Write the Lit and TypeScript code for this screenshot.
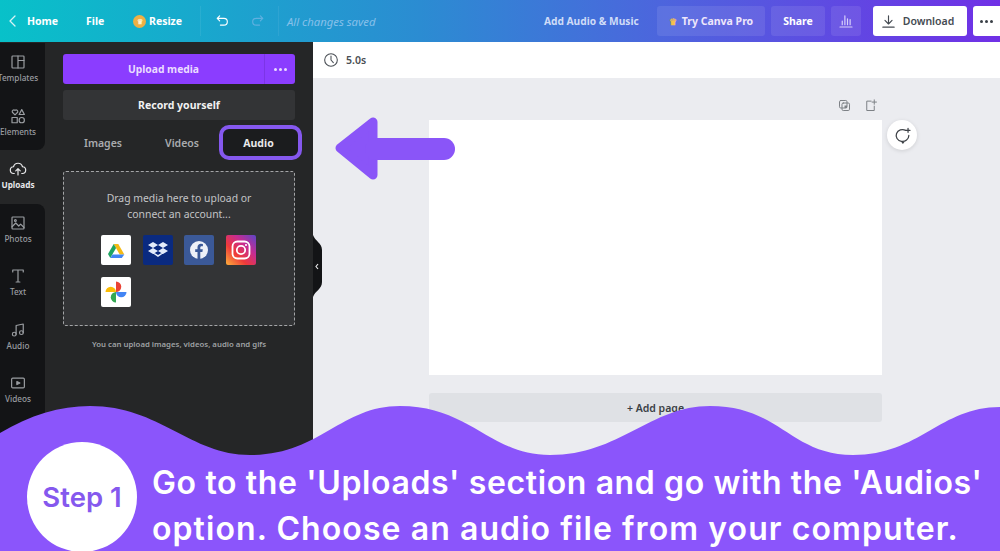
import { LitElement, html, css, svg } from "lit";
import { customElement } from "lit/decorators.js";

const ic = (body: unknown, size = 20, vb = 24) => html`<svg width=${size} height=${size} viewBox="0 0 ${vb} ${vb}" fill="none" stroke="currentColor" stroke-width="1.6" stroke-linecap="round" stroke-linejoin="round">${body}</svg>`;

const railItems: [string, unknown][] = [
  ["Templates", svg`<rect x="4" y="4" width="16" height="16" rx="1"/><path d="M12 4v16M12 10h8"/>`],
  ["Elements", svg`<path d="M8 10.500 4.500 7a2.200 2.200 0 0 1 3.500-2.500A2.200 2.200 0 0 1 11.500 7Z"/><path d="M17 3.500 20.500 10h-7Z"/><rect x="4" y="14" width="7" height="7"/><circle cx="17" cy="17.500" r="3.500"/>`],
  ["Uploads", svg`<path d="M7 18H6.500a4.500 4.500 0 0 1-.5-9 6.200 6.200 0 0 1 12 0 4.500 4.500 0 0 1-.5 9H17"/><path d="M12 20v-8M9 14.500l3-3 3 3"/>`],
  ["Photos", svg`<rect x="4" y="4" width="16" height="16" rx="1"/><circle cx="8.500" cy="8.500" r="1.200"/><path d="m4 17 5-5 4 4 2.500-2.500L20 18"/>`],
  ["Text", svg`<path d="M5 6.500V4h14v2.500M12 4v16M9.500 20h5"/>`],
  ["Audio", svg`<path d="M9.500 17.500V6l9.500-2v11.500"/><circle cx="7" cy="17.500" r="2.500"/><circle cx="16.500" cy="15.500" r="2.500"/>`],
  ["Videos", svg`<rect x="3.500" y="5.500" width="17" height="13" rx="1.500"/><path d="m10.500 10 4 2-4 2Z" fill="currentColor"/>`],
];

@customElement("app-root")
export class AppRoot extends LitElement {
  static styles = css`
    :host { display: block; width: 1000px; height: 551px; position: relative; overflow: hidden; font-family: "Noto Sans", "Open Sans", sans-serif; background: #ebecf0; }
    * { box-sizing: border-box; }
    .top { height: 42px; display: flex; align-items: center; color: #fff; font-size: 10.500px; font-weight: 700; background: linear-gradient(90deg, #08c1c9 0%, #2b8cd2 42%, #4f62de 68%, #7030e6 100%); }
    .top svg { display: block; flex: none; }
    .back { margin-left: 6px; width: 14px; }
    .home { margin-left: 7px; width: 59px; }
    .file { width: 39px; }
    .coin { width: 13px; height: 13px; margin-left: 8px; border-radius: 50%; background: #eeb045; margin-right: 3px; display: flex; align-items: center; justify-content: center; color: #fff3cf; font-size: 7px; line-height: 1; }
    .resize { width: 33px; }
    .sep { width: 1px; height: 30px; background: rgba(255,255,255,.07); flex: none; }
    .s1 { margin-left: 18px; }
    .s2 { margin-left: 12px; }
    .undo { margin-left: 13px; color: #fff; }
    .redo { margin-left: 18px; color: #5fb0e0; }
    .saved { margin-left: 8px; width: 257px; font-style: italic; font-weight: 400; color: #86c0ea; font-size: 11.300px; }
    .addaudio { width: 113px; color: #cfdcf7; font-size: 10.200px; }
    .tb { height: 30px; border-radius: 3px; background: rgba(255,255,255,.09); display: flex; align-items: center; justify-content: center; }
    .pro { width: 108px; gap: 5px; color: #eee7fb; }
    .crown { color: #f6c04d; font-size: 9px; line-height: 1; }
    .share { width: 54px; margin-left: 6px; }
    .chart { width: 30px; margin-left: 6px; color: #d8d0fa; }
    .white { background: #fff; color: #3a3f46; margin-left: 12px; }
    .dl { width: 94px; gap: 6px; font-weight: 600; color: #454b52; padding-right: 6px; }
    .more { width: 40px; margin-left: 6px; margin-right: -13px; padding-right: 13px; }
    .dots { display: flex; gap: 2px; }
    .dots i { width: 3px; height: 3px; border-radius: 50%; background: currentColor; display: block; }
    .main { height: 509px; display: flex; }
    .rail-wrap { background: #252627; display: flex; flex-direction: column; flex: none; margin-left: -9px; width: 54px; padding-top: 1px; }
    .ri { height: 53.500px; background: #131416; color: #9a9da1; display: flex; flex-direction: column; align-items: center; padding-top: 10px; font-size: 8.200px; font-weight: 500; line-height: 11px; white-space: nowrap; }
    .ri svg { display: block; margin-bottom: 1px; }
    .ri.active { background: #252627; color: #e8e8ea; font-weight: 700; }
    .ri.before { border-bottom-right-radius: 8px; }
    .ri.after { border-top-right-radius: 8px; }
    .rest { flex: 1; background: #131416; }
    .panel { width: 268px; flex: none; background: #252627; padding: 12px 18px; color: #fff; }
    .upload { height: 30px; display: flex; background: #8b3dff; border-radius: 3px; font-size: 10.300px; font-weight: 700; color: #eadcff; align-items: center; }
    .upload > span { flex: 1; text-align: center; }
    .upmore { width: 31px; height: 30px; border-left: 1px solid #7c35e6; display: flex; align-items: center; justify-content: center; color: #eadcff; }
    .record { height: 30px; margin-top: 6px; background: #333436; border-radius: 3px; font-size: 10.500px; font-weight: 700; color: #f1f1f2; display: flex; align-items: center; justify-content: center; }
    .tabs { display: grid; grid-template-columns: 80px 76px 83px; margin-right: -7px; padding: 5px 0 11px; font-size: 10.500px; font-weight: 600; color: #a9abae; }
    .tab { height: 35px; display: flex; align-items: center; justify-content: center; }
    .tab.vid { padding-left: 2px; }
    .tab.on { background: #1b1c1e; border: 4.500px solid #8558ee; border-radius: 10px; color: #e9e9ea; font-weight: 700; padding-right: 4px; }
    .drop { height: 155px; background: #333436; border: 1.500px dashed #a4a5a7; border-radius: 3px; padding-top: 18px; }
    .drop p { margin: 0; text-align: center; font-size: 10.400px; line-height: 16px; color: #c3c4c6; }
    .apps { display: grid; grid-template-columns: repeat(4, 30px); column-gap: 11.700px; row-gap: 12px; margin: 13px 0 0 37px; }
    .app { width: 30px; height: 30px; border-radius: 2px; overflow: hidden; display: block; }
    .cap { margin-top: 13px; text-align: center; font-size: 7.800px; font-weight: 600; color: #9fa1a4; line-height: 11px; }
    .work { flex: 1; display: flex; flex-direction: column; }
    .dur { height: 36px; background: #fff; display: flex; align-items: center; gap: 7px; padding-left: 10px; font-size: 10.500px; font-weight: 600; color: #4a4f55; }
    .stage { flex: 1; padding: 20px 0 0 116px; }
    .tools { width: 453px; height: 22px; display: flex; justify-content: flex-end; gap: 11px; padding-right: 4px; color: #7d8186; align-items: flex-start; }
    .row { display: flex; gap: 5px; }
    .canvas { width: 453px; height: 255px; background: #fff; }
    .bubble { width: 30px; height: 30px; border-radius: 50%; background: #fff; display: flex; align-items: center; justify-content: center; color: #3f4348; box-shadow: 0 1px 4px rgba(0,0,0,.12); }
    .addpage { width: 453px; height: 29px; margin-top: 18px; background: #dfe1e5; border-radius: 3px; font-size: 10.500px; font-weight: 600; color: #3a3f46; display: flex; align-items: center; justify-content: center; }
    .handle { position: absolute; left: 313px; top: 235px; display: block; }
    .arrow { position: absolute; left: 330px; top: 110px; display: block; }
    .banner { position: absolute; left: 0; right: 0; bottom: 0; height: 145px; padding: 36px 0 0 27px; display: flex; gap: 15px; color: #fff; }
    .wave { position: absolute; inset: 0; display: block; }
    .circle { position: relative; width: 110px; height: 110px; flex: none; border-radius: 50%; background: #fff; color: #8558ee; font-family: "Inter", "Open Sans", sans-serif; font-weight: 600; font-size: 27.500px; display: flex; align-items: center; justify-content: center; }
    .msg { position: relative; margin-top: 18px; font-family: "Inter", "Open Sans", sans-serif; font-weight: 600; font-size: 32px; line-height: 46px; white-space: nowrap; }
    .msg div:first-child { letter-spacing: 0.620px; }
    .msg div:last-child { letter-spacing: 1.080px; }
  `;

  private dots() { return html`<span class="dots"><i></i><i></i><i></i></span>`; }

  private apps() {
    return html`
      <svg class="app" viewBox="0 0 30 30"><rect width="30" height="30" fill="#fff"/><path d="M12.700 9h4.600l6 10.500h-4.600Z" fill="#f5ba15"/><path d="M12.700 9 7 19l2.300 4 5.800-10Z" fill="#1fa463"/><path d="M9.300 23h11.500l2.500-3.500H11.500Z" fill="#4285f4"/></svg>
      <svg class="app" viewBox="0 0 30 30"><rect width="30" height="30" fill="#0a2a80"/><path d="m10 7 5 3-5 3-5-3Zm10 0 5 3-5 3-5-3ZM10 13l5 3-5 3-5-3Zm10 0 5 3-5 3-5-3Zm-5 7 5-3v1.500L15 22l-5-3.500V17Z" fill="#e4ecfb"/></svg>
      <svg class="app" viewBox="0 0 30 30"><rect width="30" height="30" fill="#3b5998"/><circle cx="15" cy="15" r="9" fill="#eef1f8"/><path d="M13.500 24v-7h-2.300v-2.700h2.300v-2c0-2.300 1.400-3.500 3.400-3.500l2 .2v2.300h-1.200c-1.100 0-1.400.6-1.400 1.300v1.700h2.500l-.4 2.700h-2.100v7Z" fill="#3b5998"/></svg>
      <svg class="app" viewBox="0 0 30 30"><defs><linearGradient id="ig" x1="0" y1="1" x2="1" y2="0"><stop offset="0" stop-color="#fdb03a"/><stop offset=".35" stop-color="#ee3a3a"/><stop offset=".65" stop-color="#c72c91"/><stop offset="1" stop-color="#5a46c8"/></linearGradient></defs><rect width="30" height="30" fill="url(#ig)"/><rect x="6.500" y="6.500" width="17" height="17" rx="5" fill="none" stroke="#fff" stroke-width="1.800"/><circle cx="15" cy="15" r="4.200" fill="none" stroke="#fff" stroke-width="1.800"/><circle cx="20" cy="10" r="1.100" fill="#fff"/></svg>
      <svg class="app" viewBox="0 0 30 30"><rect width="30" height="30" fill="#fff"/><path d="M15 15V4.500a5.200 5.200 0 0 1 0 10.500Z" fill="#ea4335"/><path d="M15 15h10.500a5.200 5.200 0 0 1-10.500 0Z" fill="#4285f4"/><path d="M15 15v10.500a5.200 5.200 0 0 1 0-10.500Z" fill="#34a853"/><path d="M15 15H4.500a5.200 5.200 0 0 1 10.500 0Z" fill="#fbbc05"/></svg>`;
  }

  render() {
    return html`
      <div class="top">
        <svg class="back" width="14" height="14" viewBox="0 0 14 14" fill="none" stroke="#d7f3f5" stroke-width="1.300" stroke-linecap="round" stroke-linejoin="round"><path d="M9 2 4 7l5 5"/></svg>
        <span class="home">Home</span>
        <span class="file">File</span>
        <span class="coin">♛</span>
        <span class="resize">Resize</span>
        <span class="sep s1"></span>
        <span class="undo">${ic(svg`<path d="M8 4 4.500 7.500 8 11M5 7.500h9a4.800 4.800 0 0 1 0 9.600H9"/>`, 17)}</span>
        <span class="redo">${ic(svg`<path d="m16 4 3.500 3.500L16 11M19 7.500h-9a4.800 4.800 0 0 0 0 9.600h5"/>`, 17)}</span>
        <span class="sep s2"></span>
        <span class="saved">All changes saved</span>
        <span class="addaudio">Add Audio &amp; Music</span>
        <span class="tb pro"><span class="crown">♛</span>Try Canva Pro</span>
        <span class="tb share">Share</span>
        <span class="tb chart">${ic(svg`<path d="M4 20h16M7 17v-5M10.500 17V5M14 17V9M17.500 17v-7"/>`, 18)}</span>
        <span class="tb white dl">${ic(svg`<path d="M12 4v11M7 10.500l5 5 5-5M4 20h16"/>`, 17)}Download</span>
        <span class="tb white more">${this.dots()}</span>
      </div>
      <div class="main">
        <nav class="rail-wrap">
          ${railItems.map(([label, icon], i) => html`
            <div class="ri ${i === 2 ? "active" : ""} ${i === 1 ? "before" : ""} ${i === 3 ? "after" : ""}">
              ${ic(icon, 18)}<span>${label}</span>
            </div>`)}
          <div class="rest"></div>
        </nav>
        <section class="panel">
          <div class="upload"><span>Upload media</span><div class="upmore">${this.dots()}</div></div>
          <div class="record">Record yourself</div>
          <div class="tabs">
            <div class="tab">Images</div>
            <div class="tab vid">Videos</div>
            <div class="tab on">Audio</div>
          </div>
          <div class="drop">
            <p>Drag media here to upload or<br />connect an account...</p>
            <div class="apps">${this.apps()}</div>
          </div>
          <div class="cap">You can upload images, videos, audio and gifs</div>
        </section>
        <section class="work">
          <div class="dur">${ic(svg`<circle cx="12" cy="12" r="9.500"/><path d="M12 6v6l3.500 4"/>`, 16)}5.0s</div>
          <div class="stage">
            <div class="tools">
              ${ic(svg`<rect x="4" y="4" width="12" height="12" rx="2"/><rect x="8" y="8" width="12" height="12" rx="2"/><rect x="12" y="12" width="4" height="4" fill="currentColor" stroke="none"/>`, 15)}
              ${ic(svg`<path d="M13 5H6v15h12v-7M18 3v7M14.500 6.500h7"/>`, 15)}
            </div>
            <div class="row">
              <div class="canvas"></div>
              <div class="bubble">${ic(svg`<path d="M20 12a8 7.500 0 1 1-4-6.500M11 19.500l1.500 2 1.500-2M19 3v5M16.500 5.500h5"/>`, 19)}</div>
            </div>
            <div class="addpage">+ Add page</div>
          </div>
        </section>
      </div>
      <svg class="handle" width="10" height="64" viewBox="0 0 10 64">
        <path d="M0 0C2 6 9 8 9 15V47C9 54 2 56 0 62Z" fill="#131416"/>
        <path d="M5 29 3 31.500 5 34" fill="none" stroke="#e5e5e6" stroke-width="1.200"/>
      </svg>
      <svg class="arrow" width="130" height="76" viewBox="330 110 130 76">
        <path d="M340 148 373 122V175Z" fill="#8a55f8" stroke="#8a55f8" stroke-width="9" stroke-linejoin="round"/>
        <rect x="365" y="138" width="90" height="22" rx="11" fill="#8a55f8"/>
      </svg>
      <div class="banner">
        <svg class="wave" width="1000" height="145" viewBox="0 406 1000 145">
          <path d="M0 433C30 415 60 406 90 406C160 406 190 455 250 455C320 455 340 406 400 406C470 406 490 455 550 455C620 455 650 406 710 406C780 406 790 455 853 455C920 455 940 407 1000 407V551H0Z" fill="#8b55fb"/>
        </svg>
        <div class="circle">Step 1</div>
        <div class="msg"><div>Go to the 'Uploads' section and go with the 'Audios'</div><div>option. Choose an audio file from your computer.</div></div>
      </div>
    `;
  }
}
